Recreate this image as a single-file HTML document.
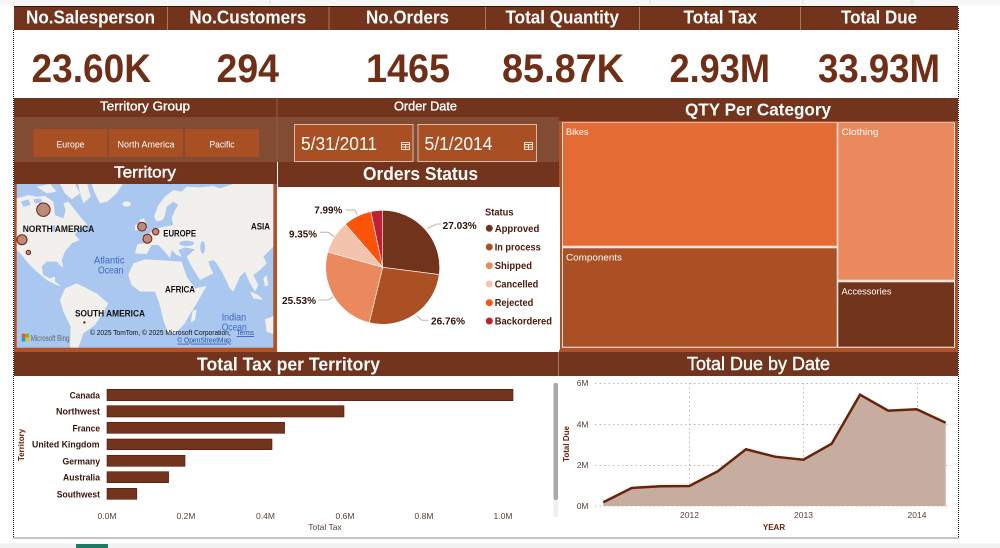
<!DOCTYPE html>
<html><head><meta charset="utf-8"><style>
html,body{margin:0;padding:0;background:#fff;width:1000px;height:548px;overflow:hidden}
svg{display:block}
text{font-family:"Liberation Sans",sans-serif}
.h{font-weight:700;fill:#fff}
.v{font-weight:700;fill:#6f2f17;font-size:40px}
.m{font-weight:700;fill:#111;font-size:9.5px}
.o{fill:#3d68c2;font-size:10px}
.t{fill:#fff;font-size:9px}
.c{fill:#fff;font-size:9.5px}
.p{font-weight:700;fill:#2e1208;font-size:10px}
.l{font-weight:700;fill:#4a1a0c;font-size:10px}
.b{font-weight:700;fill:#3a140a;font-size:9.5px}
.a{fill:#5a4038;font-size:8.5px}
.g{fill:#666;font-size:8.5px}
</style></head><body>
<svg width="1000" height="548" viewBox="0 0 1000 548" xmlns="http://www.w3.org/2000/svg">
<defs><clipPath id="mc"><rect x="50" y="72" width="770" height="491"/></clipPath></defs>
<rect width="1000" height="548" fill="#fff"/>
<rect width="1000" height="5.500" fill="#f6f6f6"/>
<path d="M270 0V5M650 0V5M803 0V5M912 0V5" stroke="#ddd"/>
<rect y="543.500" width="1000" height="4.500" fill="#f1f1f1"/>
<rect x="76" y="544" width="32" height="4" fill="#1d7a63"/>

<!-- KPI headers -->
<rect x="14" y="6" width="944" height="24" fill="#72341c"/>
<path d="M14 6.500H958" stroke="#321509"/>
<path d="M167.500 7V30M329 7V30M485.500 7V30M639.500 7V30M800.500 7V30" stroke="#a57a68" stroke-width="1"/>
<text class="h" font-size="18" x="26" y="23.500" textLength="129" lengthAdjust="spacingAndGlyphs">No.Salesperson</text>
<text class="h" font-size="18" x="189.300" y="23.500" textLength="117" lengthAdjust="spacingAndGlyphs">No.Customers</text>
<text class="h" font-size="18" x="366" y="23.500" textLength="83" lengthAdjust="spacingAndGlyphs">No.Orders</text>
<text class="h" font-size="18" x="505.500" y="23.500" textLength="113.500" lengthAdjust="spacingAndGlyphs">Total Quantity</text>
<text class="h" font-size="18" x="683.500" y="23.500" textLength="73.500" lengthAdjust="spacingAndGlyphs">Total Tax</text>
<text class="h" font-size="18" x="841" y="23.500" textLength="76" lengthAdjust="spacingAndGlyphs">Total Due</text>

<!-- KPI values -->
<text class="v" x="31.500" y="82" textLength="119.500" lengthAdjust="spacingAndGlyphs">23.60K</text>
<text class="v" x="216.500" y="82" textLength="62.500" lengthAdjust="spacingAndGlyphs">294</text>
<text class="v" x="366" y="82" textLength="84" lengthAdjust="spacingAndGlyphs">1465</text>
<text class="v" x="502" y="82" textLength="122" lengthAdjust="spacingAndGlyphs">85.87K</text>
<text class="v" x="669.500" y="82" textLength="100.500" lengthAdjust="spacingAndGlyphs">2.93M</text>
<text class="v" x="818" y="82" textLength="122" lengthAdjust="spacingAndGlyphs">33.93M</text>

<!-- Slicers -->
<rect x="14" y="98" width="545" height="19" fill="#72341c"/>
<rect x="14" y="117" width="545" height="45" fill="#824b34"/>
<path d="M277 98V162" stroke="#8e5c46"/>
<text class="h" font-size="12.500" x="100" y="110.500" textLength="90" lengthAdjust="spacingAndGlyphs" style="font-weight:400;stroke:#fff;stroke-width:.35">Territory Group</text>
<text class="h" font-size="12.500" x="394" y="110.500" textLength="63" lengthAdjust="spacingAndGlyphs" style="font-weight:400;stroke:#fff;stroke-width:.35">Order Date</text>
<rect x="33.300" y="129" width="74" height="28" fill="#a94f24"/>
<rect x="109" y="129" width="74" height="28" fill="#a94f24"/>
<rect x="185" y="129" width="74" height="28" fill="#a94f24"/>
<text class="t" x="56.500" y="147.300" textLength="28" lengthAdjust="spacingAndGlyphs">Europe</text>
<text class="t" x="117.500" y="147.300" textLength="57" lengthAdjust="spacingAndGlyphs">North America</text>
<text class="t" x="209.500" y="147.300" textLength="25" lengthAdjust="spacingAndGlyphs">Pacific</text>

<rect x="294.500" y="124.500" width="118.500" height="37" fill="#a94f24" stroke="#d9b8a6"/>
<rect x="418" y="124.500" width="118.500" height="37" fill="#a94f24" stroke="#d9b8a6"/>
<text fill="#fff" font-size="18" x="301" y="150" textLength="76" lengthAdjust="spacingAndGlyphs">5/31/2011</text>
<text fill="#fff" font-size="18" x="424.500" y="150" textLength="68" lengthAdjust="spacingAndGlyphs">5/1/2014</text>
<g fill="none" stroke="#f3dccf" stroke-width="1">
<rect x="401.500" y="142.500" width="8" height="7"/><path d="M401.500 144.500H409.500M401.500 147H409.500M405.500 144.500V149.500"/>
<rect x="524.500" y="142.500" width="8" height="7"/><path d="M524.500 144.500H532.500M524.500 147H532.500M528.500 144.500V149.500"/>
</g>

<!-- Territory / Orders headers -->
<rect x="14" y="162" width="263" height="190" fill="#b0522a"/>
<rect x="14" y="162" width="263" height="22" fill="#72341c"/>
<rect x="277" y="162" width="1" height="25" fill="#fff"/>
<text class="h" font-size="15.500" x="114" y="177.500" textLength="62" lengthAdjust="spacingAndGlyphs" style="font-weight:400;stroke:#fff;stroke-width:.4">Territory</text>
<rect x="278" y="162" width="281" height="25" fill="#72341c"/>
<text class="h" font-size="18" x="363" y="180" textLength="115" lengthAdjust="spacingAndGlyphs">Orders Status</text>

<!-- Map -->
<rect x="16.700" y="184" width="256.600" height="163.700" fill="#a9c7ef"/>
<g transform="translate(0 160) scale(.33333)" clip-path="url(#mc)">
<g fill="#f2f0ec">
<path d="M50 115L85 105L110 110L135 108L160 125L165 165L190 175L197 150L190 130L205 125L225 150L245 175L262 195L250 205L235 205L225 225L240 240L215 250L195 275L185 300L190 322L182 318L170 305L140 305L125 320L130 345L150 355L165 350L165 365L185 380L170 375L140 360L110 335L85 310L65 285L50 270Z"/>
<path d="M110 80L150 72L170 95L140 100ZM180 72L225 72L240 100L215 118L195 100ZM235 72L262 72L272 110L250 130L240 100Z"/>
<path d="M275 72L368 72L350 100L322 125L300 130L285 100Z"/>
<ellipse cx="380" cy="132" rx="13" ry="8"/>
<path d="M418 180L432 175L442 208L420 215L428 200ZM405 195L416 192L416 210L405 212Z"/>
<path d="M820 72L700 72L660 85L640 78L600 82L560 80L545 95L520 90L495 110L475 135L462 170L470 185L488 180L495 165L500 140L520 125L535 135L525 150L515 175L520 195L495 200L470 205L450 220L425 232L435 250L412 252L405 280L440 282L455 255L475 255L490 270L510 295L515 270L530 285L545 290L535 270L555 262L585 268L560 290L575 320L600 360L640 340L630 320L650 310L668 340L690 385L700 395L720 350L735 335L750 370L765 395L775 375L760 345L780 330L800 310L790 290L820 260Z"/>
<path d="M385 345L400 310L435 298L470 300L545 305L560 350L585 385L620 378L590 430L565 470L555 490L525 520L505 522L490 480L478 430L465 395L420 395L395 375Z"/>
<path d="M180 420L195 385L230 370L260 385L290 400L325 430L305 465L285 495L250 520L235 563L210 563L212 500L190 455Z"/>
<path d="M578 452L590 448L585 480L572 488Z"/>
<path d="M795 478L820 468L820 522L800 515Z"/>
<path d="M750 395L775 405L790 420L760 415ZM790 355L800 345L805 375L795 380Z"/>
</g>
<g fill="#a9c7ef">
<ellipse cx="560" cy="250" rx="22" ry="8"/>
<ellipse cx="608" cy="262" rx="7" ry="19"/>
<path d="M630 320L650 310L640 300L625 305Z"/>
<path d="M62 125L85 118L92 135L70 140ZM100 118L122 115L128 128L105 130ZM150 200L165 195L168 212L155 215Z"/>
</g>
<path d="M552 300L592 378" stroke="#a9c7ef" stroke-width="8" fill="none"/>
</g>
<g fill="#b98c7c" stroke="#7a1a0a" stroke-width="1">
<circle cx="43.400" cy="209.700" r="6.700"/>
<circle cx="22" cy="239.700" r="5"/>
<circle cx="28.400" cy="252.400" r="2.200"/>
<circle cx="142" cy="226.700" r="4.400"/>
<circle cx="155.700" cy="231.700" r="3.200"/>
<circle cx="147.400" cy="238.700" r="4.500"/>
</g>
<circle cx="84.400" cy="322.400" r="1.200" fill="#7a1a0a"/>
<text class="m" x="22.700" y="232" textLength="71.600" lengthAdjust="spacingAndGlyphs">NORTH AMERICA</text>
<text class="m" x="163.300" y="236.300" textLength="32.700" lengthAdjust="spacingAndGlyphs">EUROPE</text>
<text class="m" x="251" y="229.300" textLength="19" lengthAdjust="spacingAndGlyphs">ASIA</text>
<text class="m" x="165" y="292.300" textLength="30" lengthAdjust="spacingAndGlyphs">AFRICA</text>
<text class="m" x="75" y="316.300" textLength="70" lengthAdjust="spacingAndGlyphs">SOUTH AMERICA</text>
<text class="o" x="94" y="263.500" textLength="30.500" lengthAdjust="spacingAndGlyphs">Atlantic</text>
<text class="o" x="98" y="273.500" textLength="25.500" lengthAdjust="spacingAndGlyphs">Ocean</text>
<text class="o" x="221.700" y="320.500" textLength="24.500" lengthAdjust="spacingAndGlyphs">Indian</text>
<text class="o" x="221.700" y="330.500" textLength="25" lengthAdjust="spacingAndGlyphs">Ocean</text>
<text fill="#111" font-size="7.500" x="90" y="335.200" textLength="140.700" lengthAdjust="spacingAndGlyphs">© 2025 TomTom, © 2025 Microsoft Corporation,</text>
<text fill="#2a4fa8" font-size="7.500" x="236.700" y="335.200" textLength="17.300" lengthAdjust="spacingAndGlyphs" text-decoration="underline">Terms</text>
<text fill="#2a4fa8" font-size="7.500" x="177.300" y="342.700" textLength="53.700" lengthAdjust="spacingAndGlyphs" text-decoration="underline">© OpenStreetMap</text>
<rect x="21.700" y="333.700" width="3.600" height="3.800" fill="#f25022"/>
<rect x="25.500" y="333.700" width="3.600" height="3.800" fill="#7fba00"/>
<rect x="21.700" y="337.700" width="3.600" height="3.800" fill="#00a4ef"/>
<rect x="25.500" y="337.700" width="3.600" height="3.800" fill="#ffb900"/>
<text class="g" x="30.700" y="340.800" textLength="38.700" lengthAdjust="spacingAndGlyphs">Microsoft Bing</text>

<!-- Pie -->
<g stroke="#fff" stroke-width=".6">
<path d="M382.700 267.300L382.700 210.300A57 57 0 0 1 439.200 274.550Z" fill="#72331b"/>
<path d="M382.700 267.300L439.200 274.550A57 57 0 0 1 369.260 322.690Z" fill="#ab5025"/>
<path d="M382.700 267.300L369.260 322.690A57 57 0 0 1 327.790 252.020Z" fill="#ea885e"/>
<path d="M382.700 267.300L327.790 252.020A57 57 0 0 1 345.460 224.140Z" fill="#f4c3ad"/>
<path d="M382.700 267.300L345.460 224.140A57 57 0 0 1 370.830 211.550Z" fill="#fb5309"/>
<path d="M382.700 267.300L370.830 211.550A57 57 0 0 1 382.700 210.300Z" fill="#bf2033"/>
</g>
<g fill="none" stroke="#c4b0a8" stroke-width="1">
<path d="M427.300 228.300L437 224H441"/>
<path d="M416.700 315.700L421.700 320.300H428.300"/>
<path d="M318.300 300H328.300L333.300 296.700"/>
<path d="M320 232.300H328.300L334.300 236.700"/>
<path d="M345.700 210H355L357.300 215"/>
</g>
<text class="p" x="442.700" y="229" textLength="34" lengthAdjust="spacingAndGlyphs">27.03%</text>
<text class="p" x="431" y="324.300" textLength="34" lengthAdjust="spacingAndGlyphs">26.76%</text>
<text class="p" x="282" y="304" textLength="34" lengthAdjust="spacingAndGlyphs">25.53%</text>
<text class="p" x="289" y="237.300" textLength="28" lengthAdjust="spacingAndGlyphs">9.35%</text>
<text class="p" x="314.300" y="213.600" textLength="28" lengthAdjust="spacingAndGlyphs">7.99%</text>
<text class="l" x="485" y="215.700" textLength="28.500" lengthAdjust="spacingAndGlyphs">Status</text>
<circle cx="489.300" cy="228.300" r="3.500" fill="#72331b"/>
<circle cx="489.300" cy="247" r="3.500" fill="#ab5025"/>
<circle cx="489.300" cy="265.700" r="3.500" fill="#ea885e"/>
<circle cx="489.300" cy="284" r="3.500" fill="#f4c3ad"/>
<circle cx="489.300" cy="302.700" r="3.500" fill="#fb5309"/>
<circle cx="489.300" cy="321" r="3.500" fill="#bf2033"/>
<text class="l" x="494.700" y="231.800" textLength="44.600" lengthAdjust="spacingAndGlyphs">Approved</text>
<text class="l" x="494.700" y="250.500" textLength="46" lengthAdjust="spacingAndGlyphs">In process</text>
<text class="l" x="494.700" y="269.200" textLength="37.300" lengthAdjust="spacingAndGlyphs">Shipped</text>
<text class="l" x="494.700" y="287.500" textLength="43.600" lengthAdjust="spacingAndGlyphs">Cancelled</text>
<text class="l" x="494.700" y="306.200" textLength="38.600" lengthAdjust="spacingAndGlyphs">Rejected</text>
<text class="l" x="494.700" y="324.500" textLength="57.300" lengthAdjust="spacingAndGlyphs">Backordered</text>

<!-- Treemap -->
<rect x="559" y="98" width="399" height="23" fill="#72341c"/>
<text class="h" font-size="17.500" x="685" y="115.500" textLength="146" lengthAdjust="spacingAndGlyphs">QTY Per Category</text>
<rect x="559" y="121" width="399" height="231" fill="#b0522a"/>
<rect x="558.500" y="187" width="1.500" height="163" fill="#fff"/>
<rect x="562" y="122.300" width="393" height="225.500" fill="#efe3dc"/>
<rect x="563" y="123" width="273.700" height="122.700" fill="#e56b35"/>
<rect x="838.300" y="123" width="115.700" height="156.700" fill="#ea885e"/>
<rect x="563" y="248.300" width="273.700" height="98.400" fill="#ab5025"/>
<rect x="838.300" y="282.300" width="115.700" height="64.400" fill="#72331b"/>
<text class="c" x="566" y="135" textLength="22.500" lengthAdjust="spacingAndGlyphs">Bikes</text>
<text class="c" x="841.500" y="135" textLength="37" lengthAdjust="spacingAndGlyphs">Clothing</text>
<text class="c" x="566" y="260.500" textLength="56" lengthAdjust="spacingAndGlyphs">Components</text>
<text class="c" x="841.500" y="294.500" textLength="50" lengthAdjust="spacingAndGlyphs">Accessories</text>

<!-- Lower headers -->
<rect x="14" y="352" width="944" height="24" fill="#72341c"/>
<path d="M558.500 352V376" stroke="#a57a68"/>
<text class="h" font-size="18.500" x="197" y="370.500" textLength="183" lengthAdjust="spacingAndGlyphs">Total Tax per Territory</text>
<text class="h" font-size="18.500" x="687" y="370" textLength="143" lengthAdjust="spacingAndGlyphs" style="font-weight:400;stroke:#fff;stroke-width:.4">Total Due by Date</text>

<!-- Bar chart -->
<g fill="#72341c" stroke="#5a1606" stroke-width=".6">
<rect x="107" y="389.300" width="406" height="11.400"/>
<rect x="107" y="405.700" width="237" height="11.300"/>
<rect x="107" y="422.300" width="177.600" height="11"/>
<rect x="107" y="439" width="165" height="10.700"/>
<rect x="107" y="455.300" width="78" height="11"/>
<rect x="107" y="471.700" width="61.600" height="11"/>
<rect x="107" y="488.300" width="29.800" height="11"/>
</g>
<text class="b" x="69.600" y="398.500" textLength="30.400" lengthAdjust="spacingAndGlyphs">Canada</text>
<text class="b" x="56" y="414.500" textLength="44" lengthAdjust="spacingAndGlyphs">Northwest</text>
<text class="b" x="72.500" y="431.500" textLength="27.500" lengthAdjust="spacingAndGlyphs">France</text>
<text class="b" x="32" y="447.500" textLength="67.500" lengthAdjust="spacingAndGlyphs">United Kingdom</text>
<text class="b" x="62.500" y="464.500" textLength="37.500" lengthAdjust="spacingAndGlyphs">Germany</text>
<text class="b" x="63" y="480.500" textLength="37" lengthAdjust="spacingAndGlyphs">Australia</text>
<text class="b" x="56.800" y="497.500" textLength="43.200" lengthAdjust="spacingAndGlyphs">Southwest</text>
<g text-anchor="middle">
<text class="a" x="107" y="519">0.0M</text>
<text class="a" x="186" y="519">0.2M</text>
<text class="a" x="265.500" y="519">0.4M</text>
<text class="a" x="345" y="519">0.6M</text>
<text class="a" x="424" y="519">0.8M</text>
<text class="a" x="503" y="519">1.0M</text>
<text class="a" x="325" y="530">Total Tax</text>
<text fill="#6b2208" font-size="8" font-weight="700" transform="translate(24 445) rotate(-90)">Territory</text>
</g>
<rect x="553.500" y="383" width="4.500" height="117" rx="2" fill="#a8a8a8"/>
<rect x="553.500" y="500" width="4.500" height="17" rx="2" fill="#eeeeee"/>

<!-- Area chart -->
<g stroke="#b8b8b8" stroke-width="1" stroke-dasharray="1.500 3" fill="none">
<path d="M595 383.500H951M595 424.500H951M595 465.500H951M595 506H951"/>
<path d="M689.500 383V506M803.500 383V506M917.500 383V506"/>
</g>
<path d="M603.300 506V502.300L631.700 488L660 486.300L689.300 486L717.700 471.300L746 449.300L775 456.700L803.300 459.700L831.700 443.700L860 394.700L888.300 410.700L916.700 409.300L945.700 422.700V506Z" fill="#c6ada0"/>
<path d="M603.300 502.300L631.700 488L660 486.300L689.300 486L717.700 471.300L746 449.300L775 456.700L803.300 459.700L831.700 443.700L860 394.700L888.300 410.700L916.700 409.300L945.700 422.700" fill="none" stroke="#6b2208" stroke-width="2.500"/>
<g text-anchor="end">
<text class="a" x="588.500" y="386">6M</text>
<text class="a" x="588.500" y="427.500">4M</text>
<text class="a" x="588.500" y="468">2M</text>
<text class="a" x="588.500" y="509">0M</text>
</g>
<g text-anchor="middle">
<text class="a" x="689.500" y="518">2012</text>
<text class="a" x="803.500" y="518">2013</text>
<text class="a" x="917" y="518">2014</text>
<text fill="#6b2208" font-size="8" font-weight="700" x="774" y="530">YEAR</text>
<text fill="#6b2208" font-size="8" font-weight="700" transform="translate(569 444) rotate(-90)">Total Due</text>
</g>

<!-- Dotted frame -->
<path d="M13.500 30V538H958.500V7" fill="none" stroke="#111" stroke-width="1" stroke-dasharray="1 1"/>
</svg>
</body></html>
